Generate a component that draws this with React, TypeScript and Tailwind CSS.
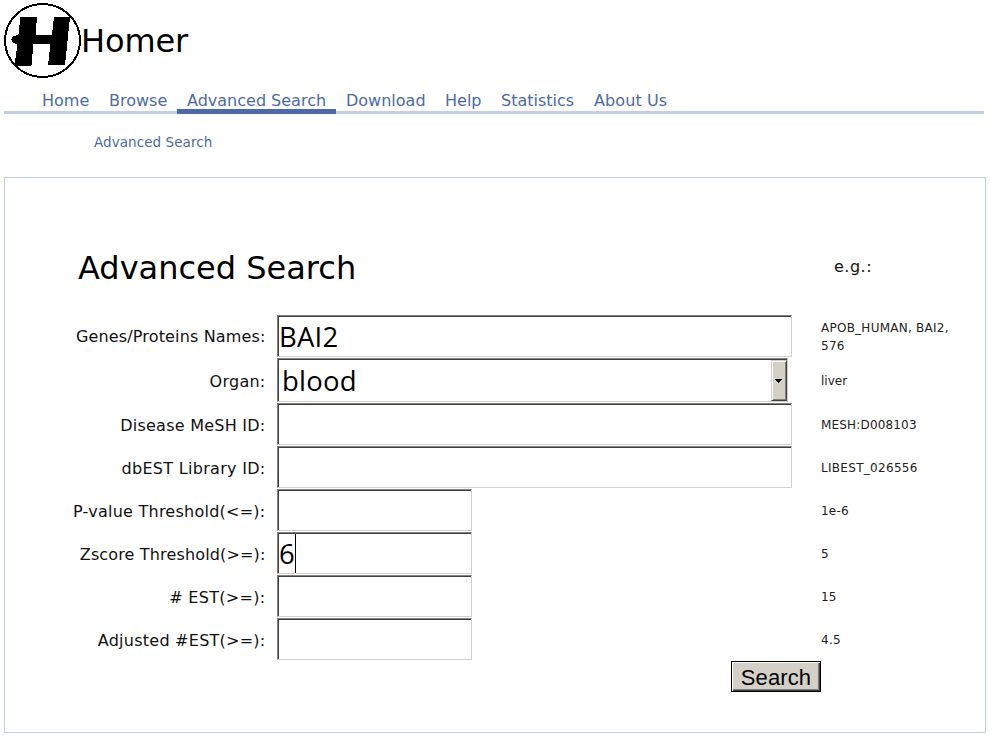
import React from "react";

const fieldBorder =
  "block h-[42px] border border-t-[#808080] border-l-[#808080] border-r-[#d4d0c8] border-b-[#d4d0c8] bg-white shadow-[inset_1px_1px_0_#404040] font-['Open_Sans',sans-serif] text-[27.5px] text-black outline-none";

const tabs = [
  { label: "Home", style: "w-[67px]" },
  { label: "Browse", style: "w-[78px]" },
  { label: "Advanced Search", style: "w-[159px]", active: true },
  { label: "Download", style: "w-[99px]" },
  { label: "Help", style: "w-[56px]" },
  { label: "Statistics", style: "w-[93px]" },
  { label: "About Us", style: "w-[93px] tracking-[0.1px]" },
];

type RowProps = {
  label: string;
  tracking?: string;
  exampleStyle?: string;
  example: string;
  height?: string;
  children: React.ReactNode;
};

function Row({ label, tracking = "tracking-[0.25px]", example, exampleStyle = "", height = "h-[43px] [&>label]:pt-[2px]", children }: RowProps) {
  return (
    <div className={`flex ${height}`}>
      <label className={`w-[260.5px] shrink-0 whitespace-nowrap text-right text-[16px] leading-[42px] text-[#111] ${tracking}`}>
        {label}
      </label>
      <div className="ml-[11.5px] w-[544px] shrink-0">{children}</div>
      <div className={`flex h-[44px] w-[140px] items-center text-[12px] leading-[18px] text-[#222] ${exampleStyle}`}>
        <span>{example}</span>
      </div>
    </div>
  );
}

function Logo() {
  return (
    <svg width="78" height="78" viewBox="0 0 78 78" className="shrink-0" shapeRendering="crispEdges">
      <ellipse cx="38.5" cy="37.5" rx="37.5" ry="36.5" fill="white" stroke="black" strokeWidth="2" />
      <path
        d="M16.500 14H33L31.500 32H48L50 14H66L61 62H44L46.500 40.500H29.500L27.500 62.500H10.500L13.500 40.500H11Q7.500 40 7.500 36.500Q7.500 33 11 33L14.500 31Z"
        fill="black"
      />
    </svg>
  );
}

function Wide({ value = "" }: { value?: string }) {
  return <input className={`${fieldBorder} w-[515px] px-px tracking-[0.2px]`} defaultValue={value} />;
}

function Short() {
  return <input className={`${fieldBorder} w-[195px] px-px`} />;
}

export default function App() {
  return (
    <div className="h-[741px] w-[990px] overflow-hidden bg-white pl-1 font-['DejaVu_Sans',sans-serif] text-black">
      <header className="flex h-[90px] pt-[3px]">
        <Logo />
        <span className="-ml-px pt-[18px] text-[32px] leading-[40px] tracking-[-0.1px]">Homer</span>
      </header>
      <nav className="flex h-6 w-[980px] border-b-[3px] border-[#c3cfea] pl-7">
        {tabs.map((t) => (
          <a
            key={t.label}
            className={`h-6 shrink-0 whitespace-nowrap pl-[10px] text-[16px] leading-[22px] text-[#4c6ba6] ${t.style} ${t.active ? "border-b-[5px] border-[#4c6ba6]" : ""}`}
          >
            {t.label}
          </a>
        ))}
      </nav>
      <div className="h-[63px] pl-[90px] pt-[18px] text-[13.5px] leading-5 tracking-[0.07px] text-[#4c6ba6]">Advanced Search</div>
      <main className="h-[556px] w-[982px] border border-[#c3cfea]">
        <div className="flex h-[137px] pl-[73px]">
          <h1 className="w-[756px] pt-[69px] text-[32px] leading-[42px]">Advanced Search</h1>
          <span className="pt-[79px] text-[16px] leading-5 tracking-[0.5px] text-[#111]">e.g.:</span>
        </div>
        <form onSubmit={(e) => e.preventDefault()}>
          <Row
            label="Genes/Proteins Names:"
            tracking="tracking-[0.15px]"
            example="APOB_HUMAN, BAI2, 576"
            exampleStyle="tracking-[0.25px]"
            height="h-[43px] [&>label]:pt-px"
          >
            <Wide value="BAI2" />
          </Row>
          <Row label="Organ:" example="liver" height="h-[45px] [&>label]:pt-[3px] [&>div:last-child]:pt-[2px]">
            <button
              type="button"
              className="flex h-[44px] w-[511px] justify-between border border-t-[#808080] border-l-[#808080] border-r-[#d4d0c8] border-b-[#d4d0c8] pb-px pl-[4px] pt-px shadow-[inset_1px_1px_0_#404040]"
            >
              <span className="font-['Open_Sans',sans-serif] text-[27.5px] leading-[42px] tracking-[0.2px]">blood</span>
              <span className="flex h-[41px] w-[16px] items-center justify-center border border-r-[#404040] border-b-[#404040] border-l-[#d4d0c8] border-t-[#d4d0c8] bg-[#d4d0c8] pr-px shadow-[inset_1px_1px_0_white,inset_-1px_-1px_0_#808080]">
                <svg width="7" height="4" viewBox="0 0 7 4" shapeRendering="crispEdges">
                  <path d="M0 0H7L3.500 4Z" fill="black" />
                </svg>
              </span>
            </button>
          </Row>
          <Row label="Disease MeSH ID:" example="MESH:D008103" exampleStyle="tracking-[0.17px]">
            <Wide />
          </Row>
          <Row label="dbEST Library ID:" tracking="tracking-[0.3px]" example="LIBEST_026556" exampleStyle="tracking-[0.3px]">
            <Wide />
          </Row>
          <Row label="P-value Threshold(<=):" example="1e-6" exampleStyle="tracking-[0.2px]">
            <Short />
          </Row>
          <Row label="Zscore Threshold(>=):" tracking="tracking-[0.15px]" example="5">
            <div className={`${fieldBorder} flex w-[195px] pl-px`}>
              <span className="w-[16px] leading-[42px]">6</span>
              <span className="mt-px h-[39px] w-px bg-black" />
            </div>
          </Row>
          <Row label="# EST(>=):" tracking="tracking-[0.3px]" example="15">
            <Short />
          </Row>
          <Row label="Adjusted #EST(>=):" tracking="tracking-[0.25px]" example="4.5" exampleStyle="tracking-[0.3px]">
            <Short />
          </Row>
          <button
            type="submit"
            className="ml-[726px] block h-[31px] w-[90px] border border-black bg-[#d4d0c8] text-center font-['Liberation_Sans',sans-serif] text-[22px] leading-[31px] tracking-[0.1px] shadow-[inset_1px_1px_0_white,inset_-1px_-1px_0_#404040,inset_-2px_-2px_0_#808080]"
          >
            Search
          </button>
        </form>
      </main>
    </div>
  );
}
